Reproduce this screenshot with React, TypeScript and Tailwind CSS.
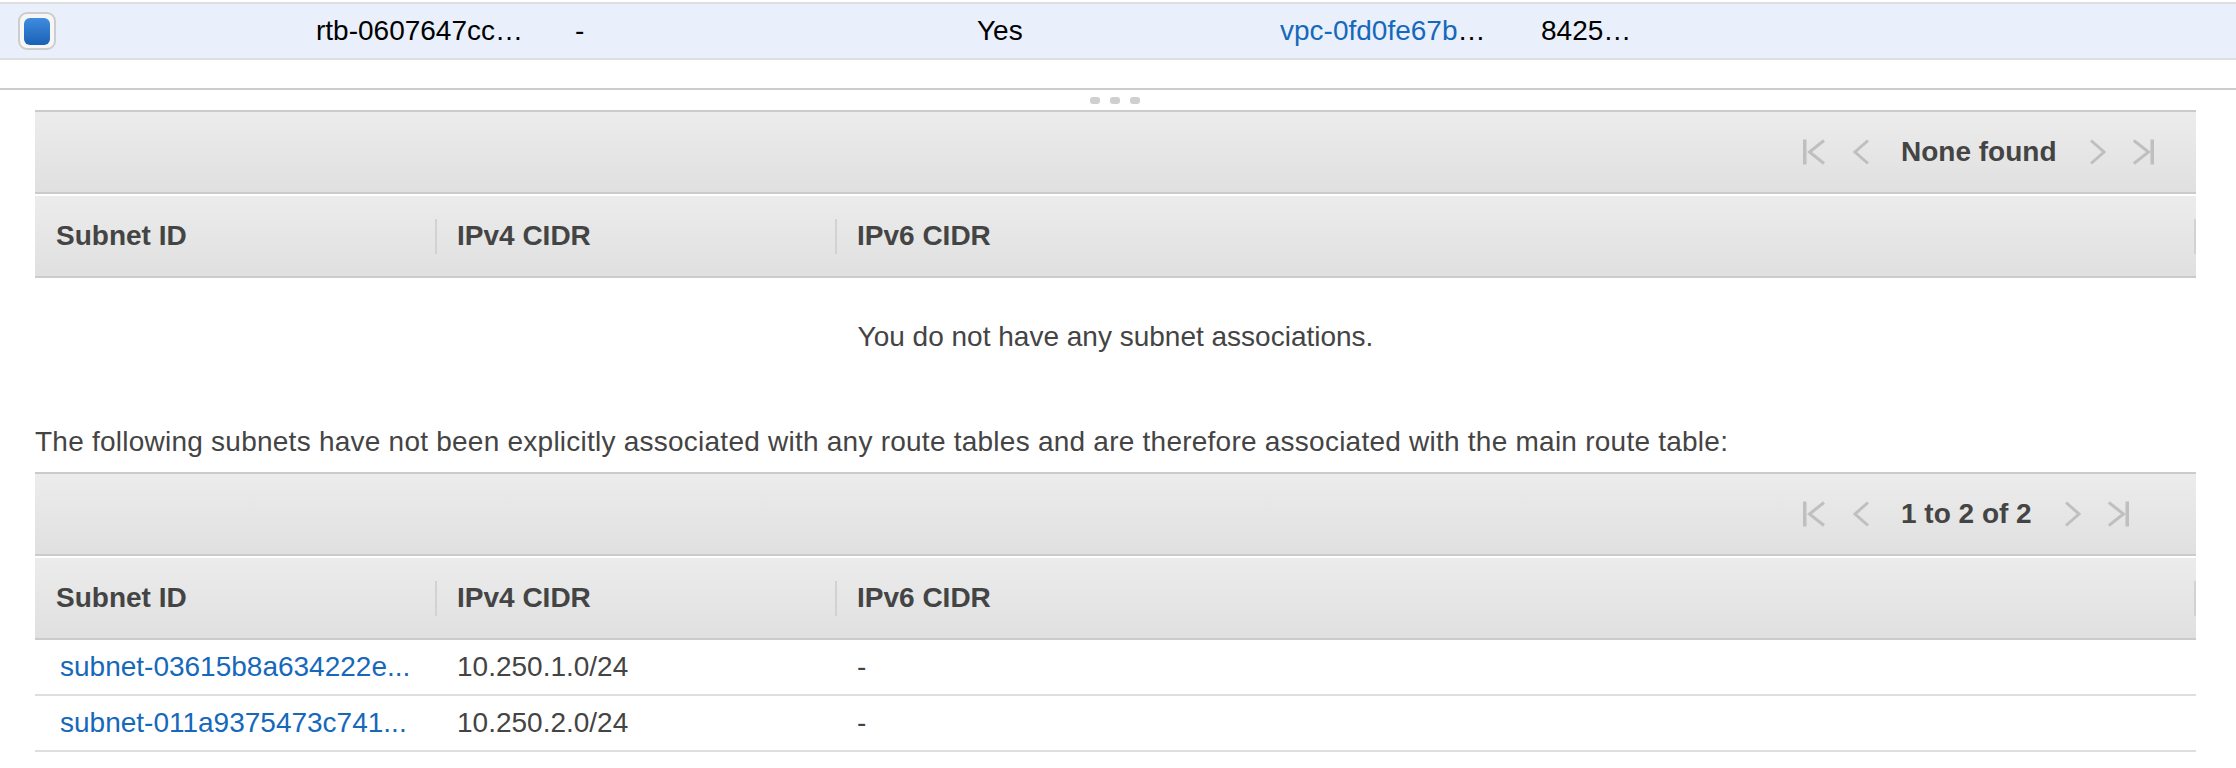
import React from "react";

const font = { fontFamily: '"Liberation Sans", Arial, Helvetica, sans-serif' };

function FirstIcon() {
  return (
    <svg width="22" height="26" viewBox="0 0 22 26" fill="none" stroke="#bfbfbf" strokeWidth="3">
      <line x1="1.75" y1="0.5" x2="1.75" y2="25.5" strokeWidth="3.5" />
      <polyline points="21,1.5 6.5,13 21,24.5" />
    </svg>
  );
}
function PrevIcon() {
  return (
    <svg width="16" height="26" viewBox="0 0 16 26" fill="none" stroke="#bfbfbf" strokeWidth="3">
      <polyline points="15,1.5 2,13 15,24.5" />
    </svg>
  );
}
function NextIcon() {
  return (
    <svg width="16" height="26" viewBox="0 0 16 26" fill="none" stroke="#bfbfbf" strokeWidth="3">
      <polyline points="1,1.5 14,13 1,24.5" />
    </svg>
  );
}
function LastIcon() {
  return (
    <svg width="22" height="26" viewBox="0 0 22 26" fill="none" stroke="#bfbfbf" strokeWidth="3">
      <polyline points="0.8,1.5 15.5,13 0.8,24.5" />
      <line x1="19.25" y1="0.5" x2="19.25" y2="25.5" strokeWidth="3.5" />
    </svg>
  );
}

function Pager({ label }: { label: string }) {
  return (
    <div className="flex h-[84px] justify-end border-y-2 border-[#cbcbcb] bg-gradient-to-b from-[#ececec] to-[#e0e0e0]">
      <div className="flex w-[393px] items-center">
        <FirstIcon />
        <div className="ml-[28px]">
          <PrevIcon />
        </div>
        <span className="ml-[32px] text-[28px] font-bold leading-[32px] text-[#444444]">{label}</span>
        <div className="ml-[33px]">
          <NextIcon />
        </div>
        <div className="ml-[27px]">
          <LastIcon />
        </div>
      </div>
    </div>
  );
}

function HeaderCell({ label, w, pl }: { label: string; w: string; pl: string }) {
  return (
    <div className={`flex items-center ${w}`}>
      <span className={`${pl} text-[28px] font-bold leading-[32px] text-[#444444]`}>{label}</span>
      <span className="ml-auto h-[35px] w-[2px] bg-[#d2d2d2]" />
    </div>
  );
}

function HeaderRow() {
  return (
    <div className="mt-[2px] flex h-[82px] border-b-2 border-[#cbcbcb] bg-gradient-to-b from-[#ececec] to-[#e0e0e0]">
      <HeaderCell label="Subnet ID" w="w-[402px]" pl="pl-[21px]" />
      <HeaderCell label="IPv4 CIDR" w="w-[400px]" pl="pl-[20px]" />
      <HeaderCell label="IPv6 CIDR" w="flex-1" pl="pl-[20px]" />
    </div>
  );
}

function Dot() {
  return <span className="block h-[7px] w-[10px] rounded-[3px] bg-[#cfcfcf]" />;
}

export default function App() {
  const rows = [
    { id: "subnet-03615b8a634222e...", v4: "10.250.1.0/24", v6: "-" },
    { id: "subnet-011a9375473c741...", v4: "10.250.2.0/24", v6: "-" },
  ];
  return (
    <div className="min-h-[768px] w-full bg-white" style={font}>
      {/* selected route table row */}
      <div className="mt-[2px] flex h-[58px] items-center border-y-2 border-[#dedede] bg-[#e9f0fb] text-[28px] leading-[32px] text-black">
        <div className="w-[296px] pl-[18px]">
          <div className="flex h-[38px] w-[38px] items-center justify-center rounded-[9px] border-2 border-[#cdcdcd] bg-[#f6f6f6]">
            <div className="h-[27px] w-[26px] rounded-[6px] bg-gradient-to-b from-[#3f8ce0] to-[#1a61b5]" />
          </div>
        </div>
        <div className="w-[259px] pl-[20px]">rtb-0607647cc…</div>
        <div className="w-[402px] pl-[20px]">-</div>
        <div className="w-[303px] pl-[20px]">Yes</div>
        <div className="w-[261px] pl-[20px]">
          <span className="text-[#1668bb]">vpc-0fd0fe67b</span>…
        </div>
        <div className="pl-[20px]">8425…</div>
      </div>

      <div className="h-[28px]" />
      <div className="border-t-2 border-[#cccccc]" />
      <div className="flex h-[20px] items-center justify-center gap-[10px] pr-[6px]">
        <Dot />
        <Dot />
        <Dot />
      </div>

      <div className="ml-[35px] mr-[40px]">
        <Pager label="None found" />
        <HeaderRow />
        <div className="pt-[43px] text-center text-[28px] leading-[32px] text-[#444444]">
          You do not have any subnet associations.
        </div>
      </div>

      <div className="mt-[73px] pl-[35px] text-[28px] leading-[32px] tracking-[0.24px] text-[#444444]">
        The following subnets have not been explicitly associated with any route tables and are therefore associated with the main route table:
      </div>

      <div className="ml-[35px] mr-[40px] mt-[14px]">
        <Pager label="1 to 2 of 2" />
        <HeaderRow />
        {rows.map((r) => (
          <div key={r.id} className="flex h-[56px] items-center border-b-2 border-[#dedede] text-[28px] leading-[32px] text-[#444444]">
            <div className="w-[400px] pl-[25px] text-[#1668bb]">{r.id}</div>
            <div className="w-[400px] pl-[22px]">{r.v4}</div>
            <div className="flex-1 pl-[22px]">{r.v6}</div>
          </div>
        ))}
      </div>
    </div>
  );
}
